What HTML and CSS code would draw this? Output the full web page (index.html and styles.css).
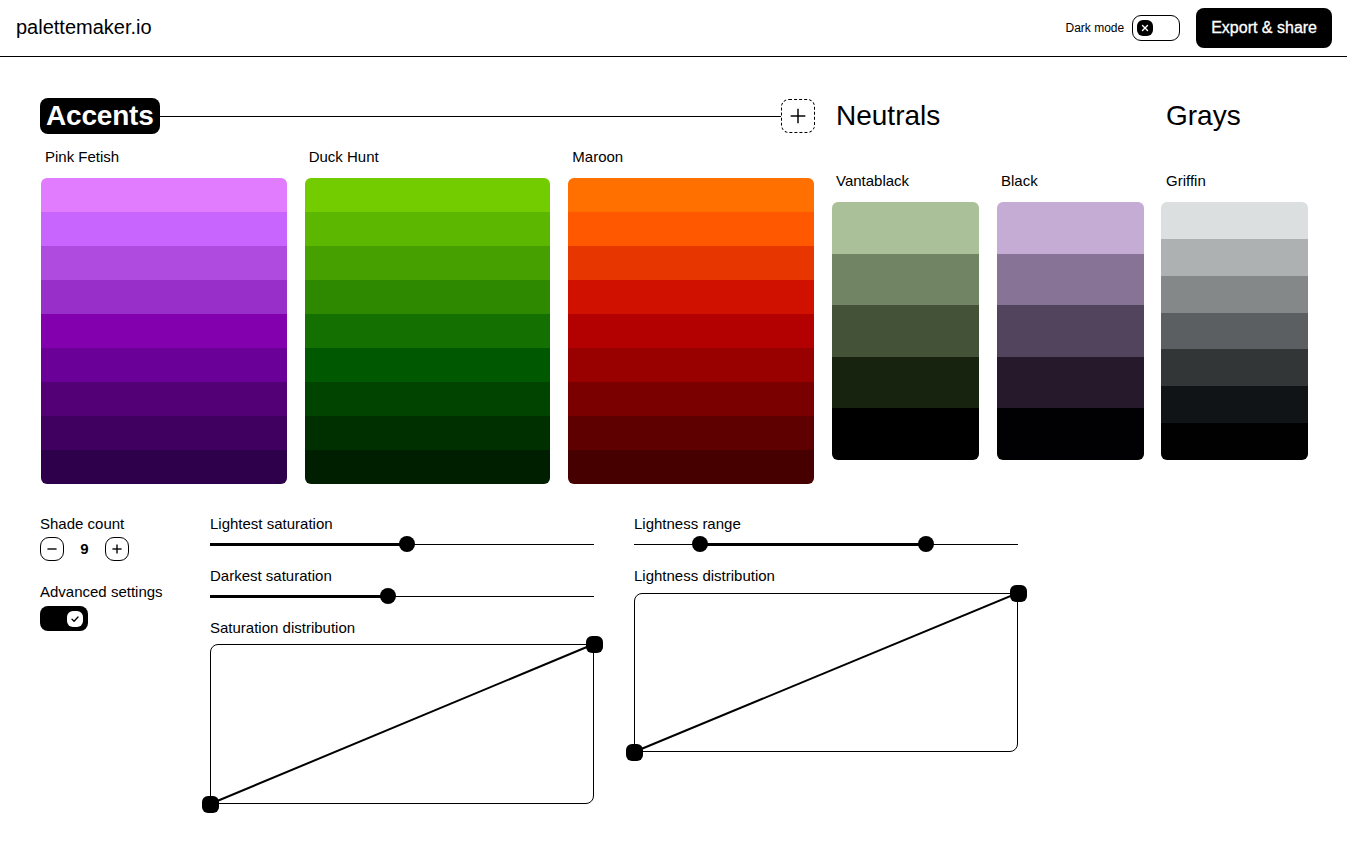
FILE: index.html
```html
<!DOCTYPE html>
<html lang="en">
<head>
    <meta charset="UTF-8">
    <meta name="viewport" content="width=device-width, initial-scale=1.0">
    <title>palettemaker.io</title>
    <link rel="stylesheet" href="styles.css">
</head>
<body>
    <header class="topbar">
        <div class="logo">palettemaker.io</div>
        <div class="topbar-actions">
            <span class="dark-label">Dark mode</span>
            <button class="dark-toggle" aria-label="Toggle dark mode">
                <span class="dark-knob">
                    <svg viewBox="0 0 16 16">
                        <line x1="5.5" y1="5.5" x2="10.5" y2="10.5"></line>
                        <line x1="10.5" y1="5.5" x2="5.5" y2="10.5"></line>
                    </svg>
                </span>
            </button>
            <button class="export-btn">Export &amp; share</button>
        </div>
    </header>

    <main class="page">
        <div class="palettes">
            <!-- Accents -->
            <section class="group accents">
                <div class="group-head">
                    <h2 class="group-title boxed">Accents</h2>
                    <div class="head-rule"></div>
                    <button class="add-btn" aria-label="Add color">
                        <svg viewBox="0 0 24 24">
                            <line x1="12" y1="4" x2="12" y2="20"></line>
                            <line x1="4" y1="12" x2="20" y2="12"></line>
                        </svg>
                    </button>
                </div>
                <div class="columns">
                    <div class="column">
                        <div class="col-name">Pink Fetish</div>
                        <div class="swatch tall">
                            <div style="background:#e17cfe"></div>
                            <div style="background:#c965ff"></div>
                            <div style="background:#b04be0"></div>
                            <div style="background:#982fc8"></div>
                            <div style="background:#8200ae"></div>
                            <div style="background:#6b0098"></div>
                            <div style="background:#530077"></div>
                            <div style="background:#400060"></div>
                            <div style="background:#2e004c"></div>
                        </div>
                    </div>
                    <div class="column">
                        <div class="col-name">Duck Hunt</div>
                        <div class="swatch tall">
                            <div style="background:#72cc00"></div>
                            <div style="background:#5bb700"></div>
                            <div style="background:#45a000"></div>
                            <div style="background:#2e8800"></div>
                            <div style="background:#147000"></div>
                            <div style="background:#005900"></div>
                            <div style="background:#004400"></div>
                            <div style="background:#002f00"></div>
                            <div style="background:#001f00"></div>
                        </div>
                    </div>
                    <div class="column">
                        <div class="col-name">Maroon</div>
                        <div class="swatch tall">
                            <div style="background:#ff7000"></div>
                            <div style="background:#ff5800"></div>
                            <div style="background:#e83600"></div>
                            <div style="background:#d11100"></div>
                            <div style="background:#b30000"></div>
                            <div style="background:#990000"></div>
                            <div style="background:#7a0000"></div>
                            <div style="background:#5f0000"></div>
                            <div style="background:#470000"></div>
                        </div>
                    </div>
                </div>
            </section>

            <!-- Neutrals -->
            <section class="group neutrals">
                <div class="group-head">
                    <h2 class="group-title">Neutrals</h2>
                </div>
                <div class="columns">
                    <div class="column">
                        <div class="col-name low">Vantablack</div>
                        <div class="swatch short">
                            <div style="background:#aac099"></div>
                            <div style="background:#718464"></div>
                            <div style="background:#445237"></div>
                            <div style="background:#17220f"></div>
                            <div style="background:#000000"></div>
                        </div>
                    </div>
                    <div class="column">
                        <div class="col-name low">Black</div>
                        <div class="swatch short">
                            <div style="background:#c5acd5"></div>
                            <div style="background:#877395"></div>
                            <div style="background:#53445e"></div>
                            <div style="background:#25192b"></div>
                            <div style="background:#010104"></div>
                        </div>
                    </div>
                </div>
            </section>

            <!-- Grays -->
            <section class="group grays">
                <div class="group-head">
                    <h2 class="group-title">Grays</h2>
                </div>
                <div class="columns">
                    <div class="column">
                        <div class="col-name low">Griffin</div>
                        <div class="swatch short">
                            <div style="background:#dcdfdf"></div>
                            <div style="background:#aeb1b1"></div>
                            <div style="background:#858888"></div>
                            <div style="background:#5c5f61"></div>
                            <div style="background:#333637"></div>
                            <div style="background:#111416"></div>
                            <div style="background:#000100"></div>
                        </div>
                    </div>
                </div>
            </section>
        </div>

        <div class="controls">
            <div class="basics">
                <div class="field">
                    <label>Shade count</label>
                    <div class="stepper">
                        <button class="step-btn" aria-label="Less">
                            <svg viewBox="0 0 24 24"><line x1="7" y1="12" x2="17" y2="12"></line></svg>
                        </button>
                        <span class="step-value">9</span>
                        <button class="step-btn" aria-label="More">
                            <svg viewBox="0 0 24 24"><line x1="7" y1="12" x2="17" y2="12"></line><line x1="12" y1="7" x2="12" y2="17"></line></svg>
                        </button>
                    </div>
                </div>
                <div class="field">
                    <label>Advanced settings</label>
                    <button class="adv-toggle" aria-label="Advanced settings">
                        <span class="adv-knob">
                            <svg viewBox="0 0 16 16"><path d="M5 8.3 L7.1 10.3 L11 6"></path></svg>
                        </span>
                    </button>
                </div>
            </div>

            <div class="control-col">
                <div class="field">
                    <label>Lightest saturation</label>
                    <div class="slider">
                        <div class="slider-fill" style="left:0; width:51.3%"></div>
                        <div class="slider-thumb" style="left:51.3%"></div>
                    </div>
                </div>
                <div class="field">
                    <label>Darkest saturation</label>
                    <div class="slider">
                        <div class="slider-fill" style="left:0; width:46.4%"></div>
                        <div class="slider-thumb" style="left:46.4%"></div>
                    </div>
                </div>
                <div class="field">
                    <label>Saturation distribution</label>
                    <div class="curve-box sat">
                        <svg class="curve" preserveAspectRatio="none">
                            <line x1="0" y1="100%" x2="100%" y2="0"></line>
                        </svg>
                        <span class="handle start"></span>
                        <span class="handle end"></span>
                    </div>
                </div>
            </div>

            <div class="control-col">
                <div class="field">
                    <label>Lightness range</label>
                    <div class="slider">
                        <div class="slider-fill" style="left:17.2%; width:58.8%"></div>
                        <div class="slider-thumb" style="left:17.2%"></div>
                        <div class="slider-thumb" style="left:76%"></div>
                    </div>
                </div>
                <div class="field">
                    <label>Lightness distribution</label>
                    <div class="curve-box light">
                        <svg class="curve" preserveAspectRatio="none">
                            <line x1="0" y1="100%" x2="100%" y2="0"></line>
                        </svg>
                        <span class="handle start"></span>
                        <span class="handle end"></span>
                    </div>
                </div>
            </div>
        </div>
    </main>
</body>
</html>
```

FILE: styles.css
```css
:root {
    --ink: #000000;
    --paper: #ffffff;
    --radius: 8px;
}

* {
    margin: 0;
    padding: 0;
    box-sizing: border-box;
}

body {
    font-family: "Liberation Sans", Arial, sans-serif;
    color: var(--ink);
    background: var(--paper);
    font-size: 15px;
    line-height: 18px;
}

button {
    font-family: inherit;
    cursor: pointer;
    border: none;
    background: none;
    color: inherit;
}

svg {
    display: block;
}

/* top bar */
.topbar {
    height: 57px;
    border-bottom: 1px solid var(--ink);
    display: flex;
    align-items: center;
    justify-content: space-between;
    padding: 0 15px 0 16px;
}

.logo {
    font-size: 20px;
    line-height: 24px;
    margin-top: -2px;
}

.topbar-actions {
    display: flex;
    align-items: center;
}

.dark-label {
    font-size: 12px;
    margin-right: 8px;
}

.dark-toggle {
    width: 48px;
    height: 26px;
    border: 1px solid var(--ink);
    border-radius: 9px;
    display: flex;
    align-items: center;
    padding-left: 4px;
    margin-right: 16px;
}

.dark-knob {
    width: 16px;
    height: 16px;
    border-radius: 6px;
    background: var(--ink);
}

.dark-knob svg {
    width: 16px;
    height: 16px;
    stroke: var(--paper);
    stroke-width: 1.4;
    stroke-linecap: round;
}

.export-btn {
    height: 40px;
    padding: 0 15px;
    background: var(--ink);
    color: var(--paper);
    border-radius: var(--radius);
    font-size: 16px;
    -webkit-text-stroke: 0.3px var(--paper);
}

/* palettes */
.page {
    padding: 41px 39px 40px 40px;
}

.palettes {
    display: flex;
    gap: 17px;
}

.group {
    flex-shrink: 0;
}

.accents { width: 775px; }
.neutrals { width: 312px; }
.grays { width: 147px; }

.group-head {
    height: 36px;
    display: flex;
    align-items: center;
}

.group-title {
    font-size: 28px;
    font-weight: 400;
    line-height: 36px;
    padding-left: 4px;
}

.grays .group-title {
    padding-left: 5px;
}

.group-title.boxed {
    background: var(--ink);
    color: var(--paper);
    font-weight: 700;
    letter-spacing: -0.2px;
    padding: 0 6px;
    border-radius: var(--radius);
}

.head-rule {
    flex: 1;
    height: 1px;
    background: var(--ink);
}

.add-btn {
    width: 34px;
    height: 34px;
    border: 1px dashed var(--ink);
    border-radius: var(--radius);
    display: flex;
    align-items: center;
    justify-content: center;
}

.add-btn svg {
    width: 22px;
    height: 22px;
    stroke: var(--ink);
    stroke-width: 1.6;
}

.columns {
    display: flex;
    gap: 18px;
}

.accents .columns {
    padding: 0 1px;
}

.column {
    flex: 1;
    min-width: 0;
}

.col-name {
    padding: 14px 4px 12px;
}

.col-name.low {
    padding-top: 38px;
}

.grays .col-name {
    padding-left: 5px;
}

.swatch {
    display: flex;
    flex-direction: column;
    border-radius: 6px;
    overflow: hidden;
}

.swatch div {
    flex: 1;
}

.swatch.tall { height: 306px; }
.swatch.short { height: 258px; }

/* controls */
.controls {
    display: flex;
    gap: 40px;
    margin-top: 31px;
}

.basics {
    width: 130px;
    display: flex;
    flex-direction: column;
    gap: 22px;
}

.control-col {
    width: 384px;
    display: flex;
    flex-direction: column;
    gap: 15px;
}

.field {
    display: flex;
    flex-direction: column;
}

.field label {
    display: block;
    white-space: nowrap;
}

.stepper {
    display: flex;
    align-items: center;
    margin-top: 4px;
}

.step-btn {
    width: 24px;
    height: 24px;
    border: 1px solid var(--ink);
    border-radius: 9px;
    display: flex;
    align-items: center;
    justify-content: center;
}

.step-btn svg {
    width: 22px;
    height: 22px;
    stroke: var(--ink);
    stroke-width: 1.5;
}

.step-value {
    width: 41px;
    text-align: center;
    font-weight: 700;
    font-size: 15px;
}

.adv-toggle {
    width: 48px;
    height: 25px;
    margin-top: 5px;
    background: var(--ink);
    border-radius: var(--radius);
    display: flex;
    align-items: center;
    justify-content: flex-end;
    padding-right: 5px;
}

.adv-knob {
    width: 16px;
    height: 16px;
    border-radius: 6px;
    background: var(--paper);
}

.adv-knob svg {
    width: 16px;
    height: 16px;
    fill: none;
    stroke: var(--ink);
    stroke-width: 1.3;
    stroke-linecap: round;
    stroke-linejoin: round;
}

/* sliders */
.slider {
    position: relative;
    height: 16px;
    margin-top: 3px;
}

.slider::before {
    content: "";
    position: absolute;
    left: 0;
    right: 0;
    top: 7.5px;
    height: 1px;
    background: var(--ink);
}

.slider-fill {
    position: absolute;
    top: 6.5px;
    height: 3px;
    background: var(--ink);
}

.slider-thumb {
    position: absolute;
    top: 0;
    width: 16px;
    height: 16px;
    margin-left: -8px;
    border-radius: 50%;
    background: var(--ink);
}

/* distribution curves */
.curve-box {
    position: relative;
    margin-top: 8px;
    border: 1px solid var(--ink);
    border-radius: var(--radius);
}

.curve-box.sat { height: 160px; margin-top: 7px; }
.curve-box.light { height: 159px; }

.curve {
    position: absolute;
    left: -1px;
    top: -1px;
    width: calc(100% + 2px);
    height: calc(100% + 2px);
    overflow: visible;
}

.curve line {
    stroke: var(--ink);
    stroke-width: 2;
}

.handle {
    position: absolute;
    width: 17px;
    height: 17px;
    border-radius: 6px;
    background: var(--ink);
}

.handle.start {
    left: -9.5px;
    bottom: -9.5px;
}

.handle.end {
    right: -9.5px;
    top: -9.5px;
}
```
